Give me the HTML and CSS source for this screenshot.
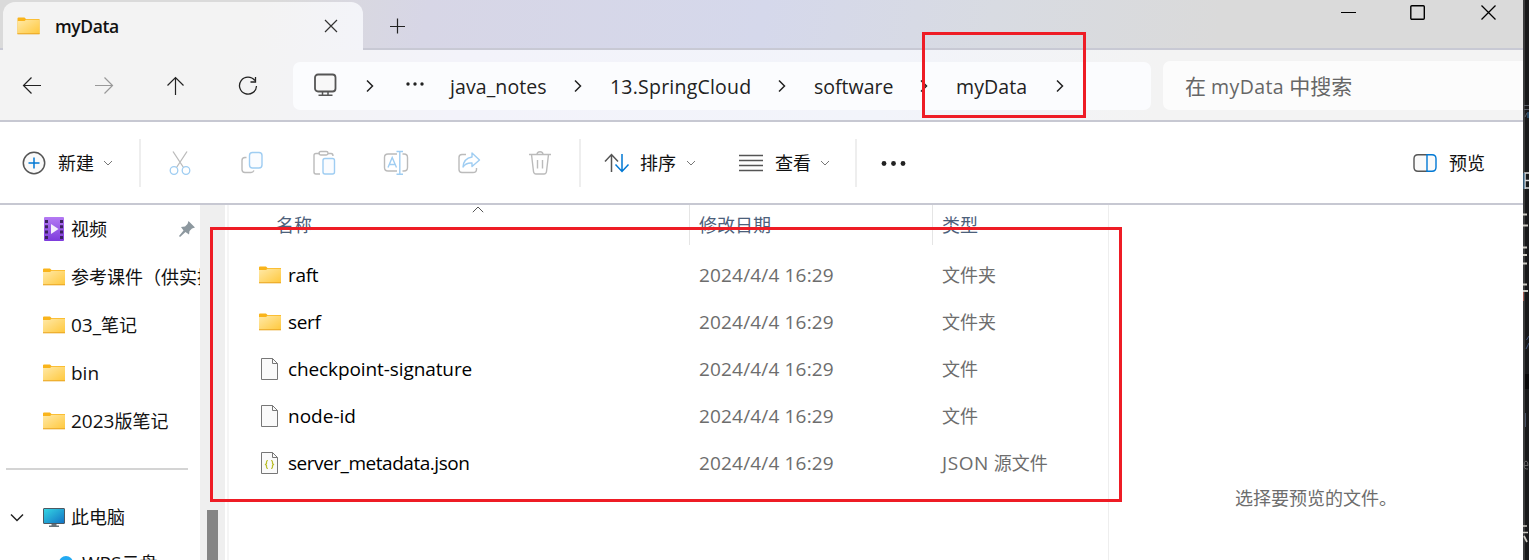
FILE: index.html
```html
<!DOCTYPE html>
<html lang="zh-CN">
<head>
<meta charset="utf-8">
<title>myData</title>
<link rel="stylesheet" href="styles.css">
</head>
<body>
<svg class="defs" width="0" height="0">
  <defs>
    <linearGradient id="fold" x1="0" y1="0" x2="1" y2="1"><stop offset="0" stop-color="#ffe9a8"/><stop offset="1" stop-color="#ffc83c"/></linearGradient>
    <linearGradient id="vid" x1="0" y1="0" x2="0" y2="1"><stop offset="0" stop-color="#b47af3"/><stop offset="1" stop-color="#7d3bdc"/></linearGradient>
    <linearGradient id="scr" x1="0" y1="0" x2="1" y2="1"><stop offset="0" stop-color="#35d8e4"/><stop offset="1" stop-color="#1170c4"/></linearGradient>
    <symbol id="folder" viewBox="0 0 22 18"><path d="M0 1.5Q0 .5 1 .5H7L8.500 2H22V17H0Z" fill="#f9b41b"/><path d="M0 4H7L8.500 2.800H22V17H0Z" fill="url(#fold)"/><path d="M0 16.800H22" stroke="#e8a321"/></symbol>
    <symbol id="file" viewBox="0 0 17 22"><path d="M.5.500H11.500L16.500 5.500V21.500H.5Z" fill="#fafafa" stroke="#777"/><path d="M11.500.5V5.500H16.500" fill="none" stroke="#777"/></symbol>
    <symbol id="next" viewBox="0 0 8 14"><path d="M1 1.500L6.500 7 1 12.500" fill="none" stroke="#222" stroke-width="1.500"/></symbol>
    <symbol id="down" viewBox="0 0 10 6"><path d="M1 1L5 5 9 1" fill="none" stroke="#777"/></symbol>
  </defs>
</svg>
<div class="screen">
  <main class="window">
    <header class="titlebar">
      <div class="tab">
        <svg class="folder" width="23" height="18"><use href="#folder"/></svg>
        <span class="tab-name">myData</span>
        <svg class="tab-close" width="14" height="14" viewBox="0 0 14 14"><path d="M1 1L13 13M13 1L1 13" stroke="#333" stroke-width="1.200"/></svg>
      </div>
      <svg class="tab-add" width="16" height="16" viewBox="0 0 16 16"><path d="M7.500 .5V15.500M0 8.500H15" stroke="#222" stroke-width="1.200"/></svg>
      <div class="controls">
        <svg width="16" height="16" viewBox="0 0 16 16"><path d="M1 8.500H16" stroke="#000"/></svg>
        <svg width="16" height="16" viewBox="0 0 16 16"><rect x=".8" y="1.700" width="13.500" height="13.500" rx="1" fill="none" stroke="#000" stroke-width="1.400"/></svg>
        <svg width="16" height="16" viewBox="0 0 16 16"><path d="M1.500 1.500L15.500 15.500M15.500 1.500L1.500 15.500" stroke="#000" stroke-width="1.300"/></svg>
      </div>
    </header>

    <nav class="navbar">
      <div class="history">
        <svg width="20" height="20" viewBox="0 0 20 20"><path d="M9.500 1.500L1.500 9.500 9.500 17.500M1.500 9.500H19" fill="none" stroke="#222" stroke-width="1.200"/></svg>
        <svg width="20" height="20" viewBox="0 0 20 20"><path d="M10.500 1.500L18.500 9.500 10.500 17.500M18.500 9.500H1" fill="none" stroke="#999" stroke-width="1.200"/></svg>
        <svg width="20" height="20" viewBox="0 0 20 20"><path d="M1.500 9.500L9.500 1.500 17.500 9.500M9.500 1.500V19" fill="none" stroke="#222" stroke-width="1.200"/></svg>
        <svg width="20" height="20" viewBox="0 0 20 20"><path d="M16.800 4.500A8.500 8.500 0 1 0 18.500 10M17.500 1V6H12.500" fill="none" stroke="#222" stroke-width="1.300"/></svg>
      </div>
      <div class="address">
        <svg class="pc" width="24" height="24" viewBox="0 0 24 24"><rect x="2" y="1.500" width="20.500" height="17" rx="3" fill="#f8f8f8" stroke="#555" stroke-width="1.800"/><path d="M9.500 18.500V22M15 18.500V22M5.500 22.300H19.500" fill="none" stroke="#555" stroke-width="1.500"/></svg>
        <svg class="c1" width="8" height="14"><use href="#next"/></svg>
        <svg class="dots" width="18" height="4" viewBox="0 0 18 4"><circle cx="2" cy="2" r="1.700"/><circle cx="9" cy="2" r="1.700"/><circle cx="16" cy="2" r="1.700"/></svg>
        <span class="crumb crumb-notes">java_notes</span><svg width="8" height="14"><use href="#next"/></svg>
        <span class="crumb crumb-cloud">13.SpringCloud</span><svg width="8" height="14"><use href="#next"/></svg>
        <span class="crumb crumb-soft">software</span><svg width="8" height="14"><use href="#next"/></svg>
        <span class="crumb crumb-data">myData</span><svg width="8" height="14"><use href="#next"/></svg>
      </div>
      <div class="search"><span class="zh">在</span> <span class="search-name">myData</span> <span class="zh">中搜索</span></div>
    </nav>

    <section class="toolbar">
      <div class="new">
        <svg width="24" height="24" viewBox="0 0 24 24"><circle cx="12" cy="12" r="10.700" fill="#fafafa" stroke="#555" stroke-width="1.500"/><path d="M12 6.500V17.500M6.500 12H17.500" stroke="#0078d4" stroke-width="1.500"/></svg>
        <span>新建</span>
        <svg class="down" width="10" height="6"><use href="#down"/></svg>
      </div>
      <div class="actions">
        <svg width="26" height="26" viewBox="0 0 26 26" fill="none" stroke-width="1.300"><path d="M6 1.500L16.500 17.500M20 1.500L9.500 17.500" stroke="#bbb"/><circle cx="7" cy="20.500" r="3.800" stroke="#9fcdf2"/><circle cx="19" cy="20.500" r="3.800" stroke="#9fcdf2"/></svg>
        <svg width="26" height="26" viewBox="0 0 26 26" fill="none" stroke-width="1.400"><path d="M7.500 7.500H6Q3 7.500 3 10.500V19.500Q3 22.500 6 22.500H12Q14 22.500 15 20.500" stroke="#bbb"/><rect x="10.500" y="2.500" width="12.500" height="15.500" rx="3" fill="#fafcff" stroke="#9fcdf2"/></svg>
        <svg width="26" height="26" viewBox="0 0 26 26" fill="none" stroke-width="1.400"><path d="M9 3.500H5Q3 3.500 3 5.500V22Q3 24 5 24H9M17 3.500H20Q22 3.500 22 6" stroke="#bbb"/><rect x="8" y="1.500" width="9" height="3.500" rx="1.700" stroke="#bbb"/><rect x="12" y="8.500" width="11.500" height="15.500" rx="2" fill="#fafcff" stroke="#9fcdf2"/></svg>
        <svg width="26" height="26" viewBox="0 0 26 26" fill="none" stroke-width="1.400"><path d="M14 4H5Q1.500 4 1.500 7.500V17.500Q1.500 21 5 21H14M19.500 4H21Q24.500 4 24.500 7.500V17.500Q24.500 21 21 21H19.500" stroke="#bbb"/><path d="M13.500 1.500H20M13.500 24.200H20M16.800 1.500V24M5 17.500L9.200 7.500 13.500 17.500M6.500 14.500H12" stroke="#9fcdf2"/></svg>
        <svg width="26" height="26" viewBox="0 0 26 26" fill="none" stroke-width="1.400"><path d="M11 4.500H7Q4 4.500 4 7.500V19.500Q4 22.500 7 22.500H18Q21.500 22.500 21.500 19.500V18" stroke="#bbb"/><path d="M17 3L24.500 10 17 16.500V13Q11 12.500 8 17Q8.500 8.500 17 7Z" stroke="#9fcdf2" stroke-linejoin="round"/></svg>
        <svg width="26" height="26" viewBox="0 0 26 26" fill="none" stroke="#bbb" stroke-width="1.400"><path d="M2 4.500H24M4.500 4.500L6.500 21.500Q6.800 24 9 24H17Q19.200 24 19.500 21.500L21.500 4.500M10 4.500Q10 1.700 13 1.700T16 4.500M10.500 10V18.500M15.500 10V18.500"/></svg>
      </div>
      <div class="sort">
        <svg width="26" height="20" viewBox="0 0 26 20" fill="none" stroke-width="1.500"><path d="M1 8.500L7.500 1.500 14 8.500M7.500 1.500V19" stroke="#555"/><path d="M11.500 11.500L18 18.500 24.500 11.500M18 18.500V1" stroke="#0078d4"/></svg>
        <span>排序</span>
        <svg class="down" width="10" height="6"><use href="#down"/></svg>
      </div>
      <div class="view">
        <svg width="24" height="18" viewBox="0 0 24 18"><path d="M0 1.500H24M0 6.500H24M0 11.500H24M0 16.500H24" stroke="#555" stroke-width="1.300"/></svg>
        <span>查看</span>
        <svg class="down" width="10" height="6"><use href="#down"/></svg>
      </div>
      <svg class="more" width="26" height="6" viewBox="0 0 26 6"><circle cx="3" cy="3.500" r="2.400"/><circle cx="12.500" cy="3.500" r="2.400"/><circle cx="22" cy="3.500" r="2.400"/></svg>
      <div class="preview-button">
        <svg width="24" height="18" viewBox="0 0 24 18" fill="#fafafa" stroke-width="1.400"><path d="M14 .8H5Q1 .8 1 4.800V13.200Q1 17.200 5 17.200H14" stroke="#555"/><path d="M14 .8H19Q23 .8 23 4.800V13.200Q23 17.200 19 17.200H14Z" stroke="#0078d4"/></svg>
        <span>预览</span>
      </div>
    </section>

    <div class="body">
      <aside class="sidebar">
        <div class="place"><svg class="video" width="20" height="24" viewBox="0 0 20 24"><rect width="20" height="24" rx="1" fill="url(#vid)"/><path d="M2.500 3V22M17.500 3V22" stroke="#3c2360" stroke-width="3" stroke-dasharray="3 2.300"/><path d="M7 7L14.500 12 7 17Z" fill="#f5eefc"/></svg><span>视频</span>
          <svg class="pin" width="16" height="16" viewBox="0 0 16 16"><path d="M9.500 0L16 6.500 13 7.500 10.500 10 10 13.500 6.500 11 1 16 0 15 4.500 9.500 2 6 6 5.500 8.500 3Z" fill="#8d989f"/></svg></div>
        <div class="place"><svg width="22" height="18"><use href="#folder"/></svg><span>参考课件（供实操</span></div>
        <div class="place"><svg width="22" height="18"><use href="#folder"/></svg><span><b>03_</b>笔记</span></div>
        <div class="place"><svg width="22" height="18"><use href="#folder"/></svg><span><b>bin</b></span></div>
        <div class="place"><svg width="22" height="18"><use href="#folder"/></svg><span><b>2023</b>版笔记</span></div>
        <div class="rule"></div>
        <div class="place computer">
          <svg class="expand" width="14" height="9" viewBox="0 0 14 9"><path d="M1 1.500L7 7.500 13 1.500" fill="none" stroke="#222" stroke-width="1.500"/></svg>
          <svg width="22" height="20" viewBox="0 0 22 20"><rect x=".5" y="1.500" width="21" height="15" rx=".5" fill="url(#scr)" stroke="#4d5962"/><path d="M8.500 17H13.500V18.500H16V20H6V18.500H8.500Z" fill="#66727a"/></svg><span>此电脑</span></div>
        <div class="place cloud"><svg width="14" height="14" viewBox="0 0 14 14"><circle cx="7" cy="7" r="7" fill="#22aaf2"/></svg><span><b>WPS</b>云盘</span></div>
      </aside>
      <div class="scroll"><div class="thumb"></div></div>
      <section class="files">
        <div class="heads">
          <span>名称</span><span>修改日期</span><span>类型</span>
          <svg class="sorted" width="12" height="7" viewBox="0 0 12 7"><path d="M.8 6.200L6 1 11.200 6.200" fill="none" stroke="#555"/></svg>
        </div>
        <div class="row"><svg width="22" height="18"><use href="#folder"/></svg><span class="name name-short">raft</span><span class="date">2024/4/4 16:29</span><span class="kind">文件夹</span></div>
        <div class="row"><svg width="22" height="18"><use href="#folder"/></svg><span class="name name-short">serf</span><span class="date">2024/4/4 16:29</span><span class="kind">文件夹</span></div>
        <div class="row"><svg class="doc" width="17" height="22"><use href="#file"/></svg><span class="name name-check">checkpoint-signature</span><span class="date">2024/4/4 16:29</span><span class="kind">文件</span></div>
        <div class="row"><svg class="doc" width="17" height="22"><use href="#file"/></svg><span class="name">node-id</span><span class="date">2024/4/4 16:29</span><span class="kind">文件</span></div>
        <div class="row"><svg class="doc" width="17" height="22" viewBox="0 0 17 22"><use href="#file" width="17" height="22"/><path d="M7 8.500Q5.500 8.500 5.500 10V11.500L4.500 12.500 5.500 13.500V15Q5.500 16.500 7 16.500M10 8.500Q11.500 8.500 11.500 10V11.500L12.500 12.500 11.500 13.500V15Q11.500 16.500 10 16.500" fill="none" stroke="#b9bd27" stroke-width="1.200"/></svg><span class="name name-json">server_metadata.json</span><span class="date">2024/4/4 16:29</span><span class="kind"><b>JSON</b> 源文件</span></div>
      </section>
      <section class="preview">选择要预览的文件。</section>
    </div>
  </main>
  <aside class="behind">
    <svg width="6" height="560" viewBox="0 0 6 560" fill="none">
      <path d="M1 105.500H6M1 109.500H6M2 117L4 113" stroke="#5b6068"/><path d="M5 112V118" stroke="#3878a8"/>
      <path d="M2 189V173H6M2 180.500H6M2 188H6" stroke="#ddd" stroke-width="1.500"/><path d="M1 173V189" stroke="#3878a8"/>
      <path d="M0 214.500H4M0 225.500H5M0 247.500H4M0 255H4M0 263.500H4M0 284.500H4M0 291H5" stroke="#cfcdc5" stroke-width="2"/>
      <path d="M.5 292V301" stroke="#a65c52"/><path d="M6 336L3.500 340M6 343L3 349" stroke="#43587e"/>
      <path d="M2 374H6V389H2Z" fill="#080808"/><path d="M2.500 413V427" stroke="#4a5365"/>
      <path d="M1 465.500H5Q5 461 3 461T1 465.500Q1 469.500 5 469" stroke="#666"/>
      <path d="M0 526H4M0 532.500H5M1 536L4 542" stroke="#cfcdc5" stroke-width="1.700"/>
    </svg>
  </aside>
  <div class="mark mark-path"></div>
  <div class="mark mark-files"></div>
</div>
</body>
</html>
```
FILE: styles.css
```css
* { box-sizing: border-box; }
body { margin: 0; overflow: hidden; font-family: "Open Sans", "Noto Sans CJK SC", sans-serif; font-size: 18px; color: #111; }
svg { display: block; flex: none; }
b { font-weight: 400; font-size: 19px; }
.defs { position: absolute; }
.screen { position: relative; display: flex; width: 1529px; height: 560px; overflow: hidden; }
.window { width: 1523px; height: 560px; display: flex; flex-direction: column; background: #fff; overflow: hidden; }
.behind { width: 6px; background: linear-gradient(90deg, #3b3c3d 2px, #18191a 2px); }

.titlebar { height: 50px; flex: none; display: flex; border-bottom: 2px solid #c8c9d4; background: linear-gradient(100deg, #dadada 0, #dadada 18%, #d7d6e6 28%, #d5d8eb 50%, #d8dbe2 65%, #dadada 80%); }
.tab { width: 360px; height: 48px; margin: 2px 0 0 3px; padding: 0 25px 0 14px; display: flex; align-items: center; flex: none; background: linear-gradient(100deg, #f3f3f3 70%, #f3f4f9); border-radius: 12px 12px 0 0; }
.tab-name { margin-left: 15px; font-weight: 600; font-size: 17.500px; letter-spacing: -.4px; }
.tab-close { margin-left: auto; margin-top: -1px; }
.tab-add { margin: 18px 0 0 27px; }
.controls { margin-left: auto; display: flex; gap: 54px; padding: 4px 27px 0 0; }

.navbar { height: 72px; flex: none; display: flex; border-bottom: 2px solid #c7c8d2; background: linear-gradient(100deg, #f3f3f3 15%, #f3f3fa 30%, #f2f4fa 58%, #f3f3f3 76%); }
.history { width: 293px; display: flex; gap: 52px; padding: 26px 0 0 22px; }
.address { width: 858px; height: 48px; margin-top: 12px; border-radius: 7px; background: #fbfcfe; display: flex; align-items: center; padding-left: 20px; }
.pc { margin-top: -2px; }
.address .c1 { margin-left: 29px; }
.dots { margin: -5px 26px 0 32px; fill: #222; }
.crumb { font-size: 19.500px; white-space: nowrap; flex: none; color: #222; letter-spacing: .1px; }
.crumb + svg { margin-right: 28px; }
.crumb-notes { width: 124px; }
.crumb-cloud { width: 168px; letter-spacing: .22px; }
.crumb-soft { width: 106px; letter-spacing: 0; }
.crumb-data { width: 100px; }
.search { width: 360px; height: 49px; margin: 11px 0 0 12px; padding-left: 22px; background: #fcfcfc; border-radius: 7px 0 0 7px; color: #666; font-size: 19.500px; line-height: 51px; white-space: nowrap; }
.search .zh { font-size: 21px; }
.search-name { letter-spacing: .4px; }

.toolbar { height: 83px; flex: none; display: flex; align-items: center; border-bottom: 2px solid #c7c8d2; line-height: 26px; }
.new { width: 141px; height: 48px; padding-left: 22px; display: flex; align-items: center; border-right: 2px solid #eee; }
.new span { margin: 0 9px 0 12px; }
.actions { width: 440px; height: 48px; padding-left: 26px; display: flex; gap: 46px; align-items: center; border-right: 2px solid #eee; }
.sort { display: flex; align-items: center; margin-left: 23px; width: 135px; }
.sort span { margin: 0 10px 0 10px; }
.view { display: flex; align-items: center; width: 118px; height: 48px; border-right: 2px solid #eee; }
.view span { margin: 0 9px 0 12px; }
.more { margin-left: 24px; fill: #222; }
.preview-button { margin-left: auto; display: flex; align-items: center; gap: 12px; padding-right: 38px; }

.body { flex: 1; display: flex; min-height: 0; }
.sidebar { width: 200px; overflow: hidden; flex: none; }
.place { height: 48px; padding-left: 43px; display: flex; align-items: center; white-space: nowrap; overflow: hidden; line-height: 26px; }
.place span { margin-left: 6px; }
.place .video { margin-left: 1px; }
.place .video + span { margin-left: 7px; }
.pin { margin-left: auto; margin-right: 5px; }
.rule { height: 2px; background: #d4d4d4; margin: 23px 12px 23px 6px; }
.computer { padding-left: 10px; }
.expand { margin-right: 19px; }
.cloud { height: 44px; padding-left: 59px; }
.cloud span { margin-left: 9px; }
.scroll { width: 29px; flex: none; background: linear-gradient(90deg, #efefef 25px, #fff 25px, #fff 27px, #f5f5f5 27px); padding: 305px 0 0 7px; }
.thumb { width: 11px; height: 60px; background: #858585; }
.files { width: 880px; flex: none; border-right: 1px solid #eee; }
.heads { position: relative; height: 41px; display: grid; grid-template-columns: 460px 243px 1fr; color: #4c607a; line-height: 41px; margin-bottom: 5px; }
.heads span { padding-left: 9px; border-left: 1px solid #e5e5e5; height: 40px; }
.heads span:first-child { border: 0; padding-left: 47px; }
.sorted { position: absolute; left: 243px; top: 1px; }
.row { height: 47px; display: grid; grid-template-columns: 29px 411px 243px 1fr; padding-left: 30px; align-items: center; white-space: nowrap; line-height: 26px; }
.row .doc { margin-left: 2px; }
.name, .date { font-size: 19px; }
.name { color: #000; }
.name-short { letter-spacing: -.3px; }
.name-check { letter-spacing: -.1px; }
.name-json { letter-spacing: -.47px; }
.date { letter-spacing: .17px; }
.date, .kind { color: #6d6d6d; }
.kind b { letter-spacing: .6px; }
.preview { flex: 1; padding-top: 280px; padding-left: 126px; color: #6d6d6d; line-height: 26px; }

.mark { position: absolute; border: 3px solid #ee1c25; }
.mark-path { left: 922px; top: 32px; width: 164px; height: 86px; }
.mark-files { left: 210px; top: 227px; width: 912px; height: 275px; }
```
